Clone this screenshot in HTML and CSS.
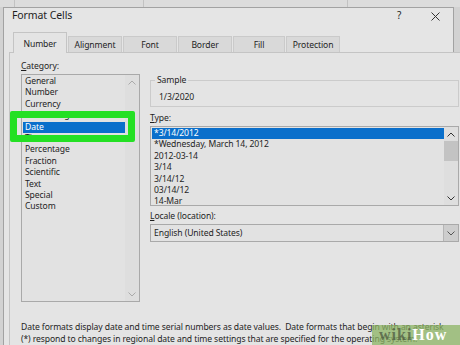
FILE: index.html
```html
<!DOCTYPE html>
<html>
<head>
    <title>Format Cells</title>
    <link rel="stylesheet" href="styles.css">
</head>
<body>
    <div class="sheet-top"></div>
    <div class="dialog">
        <div class="titlebar">
            <span class="title">Format Cells</span>
            <span class="help">?</span>
            <span class="close">
                <svg width="9" height="9" viewBox="0 0 9 9"><path d="M0.5 0.5 L8.5 8.5 M8.5 0.5 L0.5 8.5" stroke="#333" stroke-width="1" fill="none"/></svg>
            </span>
        </div>
        <div class="tabs">
            <div class="tab active">Number</div>
            <div class="tab">Alignment</div>
            <div class="tab">Font</div>
            <div class="tab">Border</div>
            <div class="tab narrow">Fill</div>
            <div class="tab">Protection</div>
        </div>
        <div class="panel">
            <div class="cols">
                <div class="category">
                    <div class="label"><u>C</u>ategory:</div>
                    <div class="listbox cat-list">
                        <ul class="items">
                            <li>General</li>
                            <li>Number</li>
                            <li>Currency</li>
                            <li>Accounting</li>
                            <li class="selected">Date</li>
                            <li>Time</li>
                            <li>Percentage</li>
                            <li>Fraction</li>
                            <li>Scientific</li>
                            <li>Text</li>
                            <li>Special</li>
                            <li>Custom</li>
                        </ul>
                        <div class="scrollbar">
                            <span class="arrow"><svg width="8" height="5" viewBox="0 0 8 5"><path d="M0.5 4.5 L4 1 L7.5 4.5" stroke="#aaa" fill="none"/></svg></span>
                            <span class="arrow"><svg width="8" height="5" viewBox="0 0 8 5"><path d="M0.5 0.5 L4 4 L7.5 0.5" stroke="#aaa" fill="none"/></svg></span>
                        </div>
                    </div>
                </div>
                <div class="right">
                    <fieldset class="sample">
                        <legend>Sample</legend>
                        <div class="sample-value">1/3/2020</div>
                    </fieldset>
                    <div class="label"><u>T</u>ype:</div>
                    <div class="listbox type-list">
                        <ul class="items">
                            <li class="selected">*3/14/2012</li>
                            <li>*Wednesday, March 14, 2012</li>
                            <li>2012-03-14</li>
                            <li>3/14</li>
                            <li>3/14/12</li>
                            <li>03/14/12</li>
                            <li>14-Mar</li>
                        </ul>
                        <div class="scrollbar">
                            <span class="arrow"><svg width="8" height="5" viewBox="0 0 8 5"><path d="M0.5 4.5 L4 1 L7.5 4.5" stroke="#333" fill="none"/></svg></span>
                            <span class="thumb"></span>
                            <span class="track"></span>
                            <span class="arrow"><svg width="8" height="5" viewBox="0 0 8 5"><path d="M0.5 0.5 L4 4 L7.5 0.5" stroke="#333" fill="none"/></svg></span>
                        </div>
                    </div>
                    <div class="label locale-label"><u>L</u>ocale (location):</div>
                    <div class="dropdown">
                        <span class="value">English (United States)</span>
                        <span class="drop-btn"><svg width="8" height="5" viewBox="0 0 8 5"><path d="M0.5 0.5 L4 4 L7.5 0.5" stroke="#555" fill="none"/></svg></span>
                    </div>
                </div>
            </div>
            <p class="desc">Date formats display date and time serial numbers as date values.&nbsp; Date formats that begin with an asterisk<br>(*) respond to changes in regional date and time settings that are specified for the operating system.</p>
        </div>
    </div>
    <div class="green-box"></div>
    <div class="watermark"><span class="wiki">wiki</span>How</div>
</body>
</html>
```

FILE: styles.css
```css
body {
    margin: 0;
    width: 460px;
    height: 345px;
    overflow: hidden;
    background-color: #d2d2d2;
    font-family: "Noto Sans", "Open Sans", sans-serif;
    font-size: 8.6px;
    letter-spacing: -0.1px;
    color: #1e1e1e;
    position: relative;
}
/* excel grid behind the dialog */
.sheet-top {
    height: 7px;
    background:
        linear-gradient(to right, transparent 14px, #c2c2c2 14px, #c2c2c2 15px, transparent 15px),
        linear-gradient(to right, transparent 143px, #c2c2c2 143px, #c2c2c2 144px, transparent 144px),
        linear-gradient(to right, transparent 347px, #c2c2c2 347px, #c2c2c2 348px, transparent 348px),
        #dcdcdc;
}
.dialog {
    margin-left: 3px;
    width: 449px;
    height: 345px;
    border: 1px solid #a2a2a2;
    background-color: #e5e5e5;
}
.titlebar {
    height: 24px;
    display: flex;
    align-items: flex-start;
    line-height: 14px;
}
.title {
    font-size: 10.5px;
    margin-left: 8px;
    flex: 1;
}
.help {
    font-size: 10px;
    width: 12px;
    margin-right: 22px;
}
.close {
    margin-right: 13px;
    padding-top: 3px;
}
.tabs {
    display: flex;
    height: 20px;
    padding-left: 9px;
    align-items: flex-end;
    position: relative;
    z-index: 1;
}
.tab {
    width: 54px;
    height: 16px;
    line-height: 16px;
    text-align: center;
    background-color: #d9d9d9;
    border: 1px solid #cacaca;
    border-bottom: none;
    margin-right: 1px;
    box-sizing: border-box;
}
.tab.narrow {
    width: 52px;
}
.tab.active {
    height: 21px;
    line-height: 22px;
    background-color: #e4e4e4;
    margin-bottom: -1px;
    border-color: #c4c4c4;
}
.panel {
    margin-left: 5px;
    width: 438px;
    height: 300px;
    border: 1px solid #c4c4c4;
    background-color: #e4e4e4;
    padding: 7px 8px 0 11px;
}
.cols {
    display: flex;
    gap: 9px;
}
.category {
    width: 120px;
}
.right {
    flex: 1;
}
.label {
    line-height: 12px;
    height: 12px;
    margin-bottom: 2px;
}
.listbox {
    display: flex;
    border: 1px solid #a9a9a9;
    background-color: #e2e2e2;
    overflow: hidden;
}
.cat-list {
    height: 226px;
    width: 117px;
}
.items {
    list-style: none;
    margin: 0 0 0 1px;
    padding: 1px 0 0 0;
    flex: 1;
}
.items li {
    height: 11.4px;
    line-height: 11.4px;
    padding-left: 2px;
    white-space: nowrap;
}
.items li.selected {
    background-color: #0a6fcb;
    color: #ffffff;
}
.scrollbar {
    width: 14px;
    display: flex;
    flex-direction: column;
    justify-content: space-between;
    background-color: #dedede;
}
.arrow {
    height: 14px;
    display: flex;
    align-items: center;
    justify-content: center;
}
.thumb {
    height: 20px;
    background-color: #c3c3c3;
}
.track {
    flex: 1;
}
.sample {
    margin: 14px 0 5px 0;
    padding: 0 0 3px 8px;
    border: 1px solid #cbcbcb;
    height: 33px;
    box-sizing: border-box;
}
.sample legend {
    padding: 0 2px;
    margin-left: -4px;
    line-height: 12px;
}
.sample-value {
    line-height: 12px;
    margin-top: 5px;
}
.type-list {
    height: 80px;
    box-sizing: border-box;
    margin-bottom: 4px;
}
.dropdown {
    display: flex;
    height: 18px;
    border: 1px solid #a9a9a9;
    background-color: #e2e2e2;
    box-sizing: border-box;
    line-height: 16px;
}
.dropdown .value {
    flex: 1;
    padding-left: 3px;
}
.drop-btn {
    width: 14px;
    background-color: #cdcdcd;
    border-left: 1px solid #b5b5b5;
    display: flex;
    align-items: center;
    justify-content: center;
}
.desc {
    margin: 19px 0 0 0;
    line-height: 12px;
    white-space: nowrap;
}
/* highlight marker drawn over the screenshot */
.green-box {
    position: absolute;
    left: 10px;
    top: 111px;
    width: 125px;
    height: 31px;
    box-sizing: border-box;
    border: 7px solid #24e024;
    border-radius: 2px;
}
.watermark {
    position: absolute;
    right: 0;
    bottom: 0;
    width: 88px;
    height: 20px;
    background-color: rgba(140, 180, 100, 0.75);
    font-family: "Liberation Serif", serif;
    font-weight: bold;
    font-size: 16px;
    line-height: 20px;
    letter-spacing: 1px;
    color: #ffffff;
    padding-left: 7px;
    box-sizing: border-box;
}
.wiki {
    color: rgba(70, 80, 60, 0.7);
}
```
